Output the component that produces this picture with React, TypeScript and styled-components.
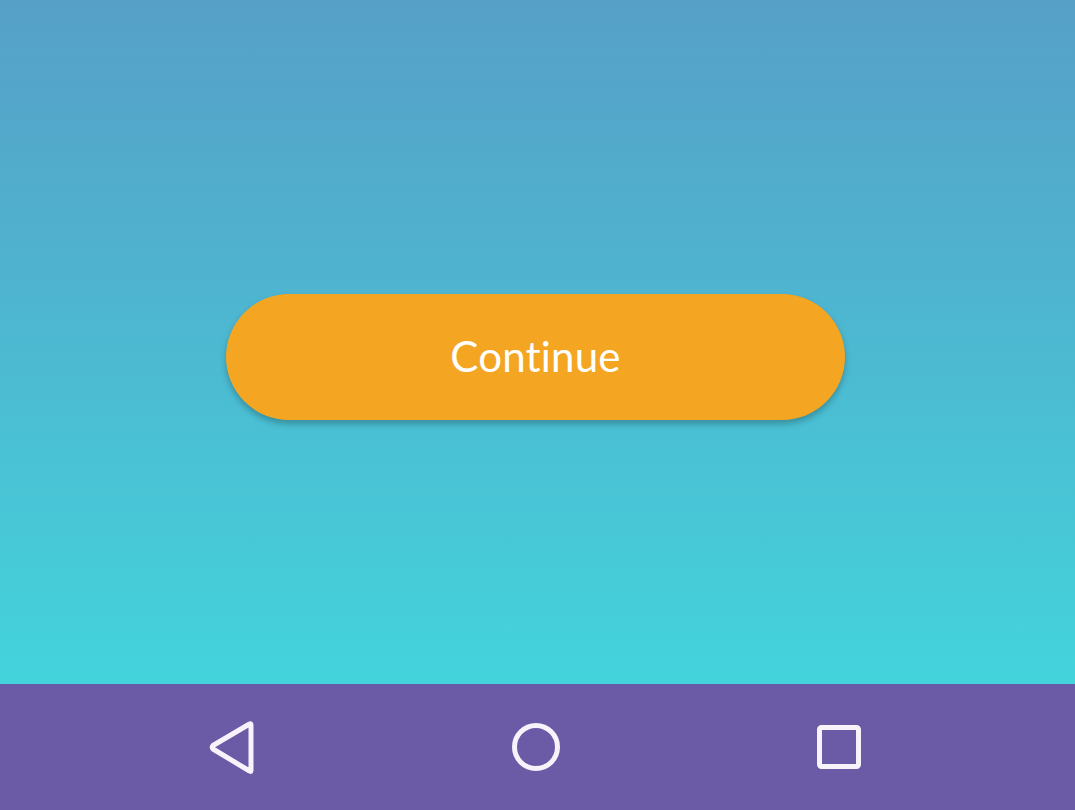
import React from "react";
import styled, { createGlobalStyle } from "styled-components";

const Global = createGlobalStyle`
  html, body { margin: 0; padding: 0; height: 100%; }
  #root { height: 100%; }
  body { font-family: Lato, "Noto Sans", sans-serif; }
`;

const Screen = styled.div`
  display: flex;
  flex-direction: column;
  width: 1075px;
  height: 810px;
  overflow: hidden;
`;

const Content = styled.main`
  flex: 1;
  display: flex;
  justify-content: center;
  align-items: flex-start;
  padding-top: 294px;
  padding-right: 4px;
  background: linear-gradient(180deg, #56a0c7 0%, #4fb3cf 40%, #43d4dc 100%);
`;

const ContinueButton = styled.button`
  width: 619px;
  height: 126px;
  border: none;
  border-radius: 63px;
  background: #f4a623;
  color: #ffffff;
  font-family: Lato, "Noto Sans", sans-serif;
  font-size: 42px;
  font-weight: 400;
  letter-spacing: 0.2px;
  box-shadow: 0 4px 6px rgba(0, 0, 0, 0.25);
  cursor: pointer;
  padding: 0 0 2px 0;
`;

const NavBar = styled.nav`
  height: 126px;
  flex-shrink: 0;
  background: #6b5ba6;
  display: flex;
  align-items: center;
  justify-content: space-between;
  padding: 0 210px 0 206px;
`;

const NavIcon = styled.svg`
  width: 56px;
  height: 56px;
  display: block;
`;

export default function App() {
  return (
    <>
      <Global />
      <Screen>
        <Content>
          <ContinueButton>Continue</ContinueButton>
        </Content>
        <NavBar>
          <NavIcon viewBox="0 0 56 56" fill="none" stroke="#f7f3fa" strokeWidth={5} strokeLinejoin="round" strokeLinecap="round">
            <path d="M45 6.5 L45 51.5 Q45 53 43.5 52 L7 30 Q5.5 28 7 26.5 L43.5 5 Q45 4 45 6.5 Z" />
          </NavIcon>
          <NavIcon viewBox="0 0 56 56" fill="none" stroke="#f7f3fa" strokeWidth={5}>
            <circle cx="28" cy="28" r="21.5" />
          </NavIcon>
          <NavIcon viewBox="0 0 56 56" fill="none" stroke="#f7f3fa" strokeWidth={5} strokeLinejoin="round">
            <rect x="10.5" y="8.5" width="39" height="39" rx="2" />
          </NavIcon>
        </NavBar>
      </Screen>
    </>
  );
}
